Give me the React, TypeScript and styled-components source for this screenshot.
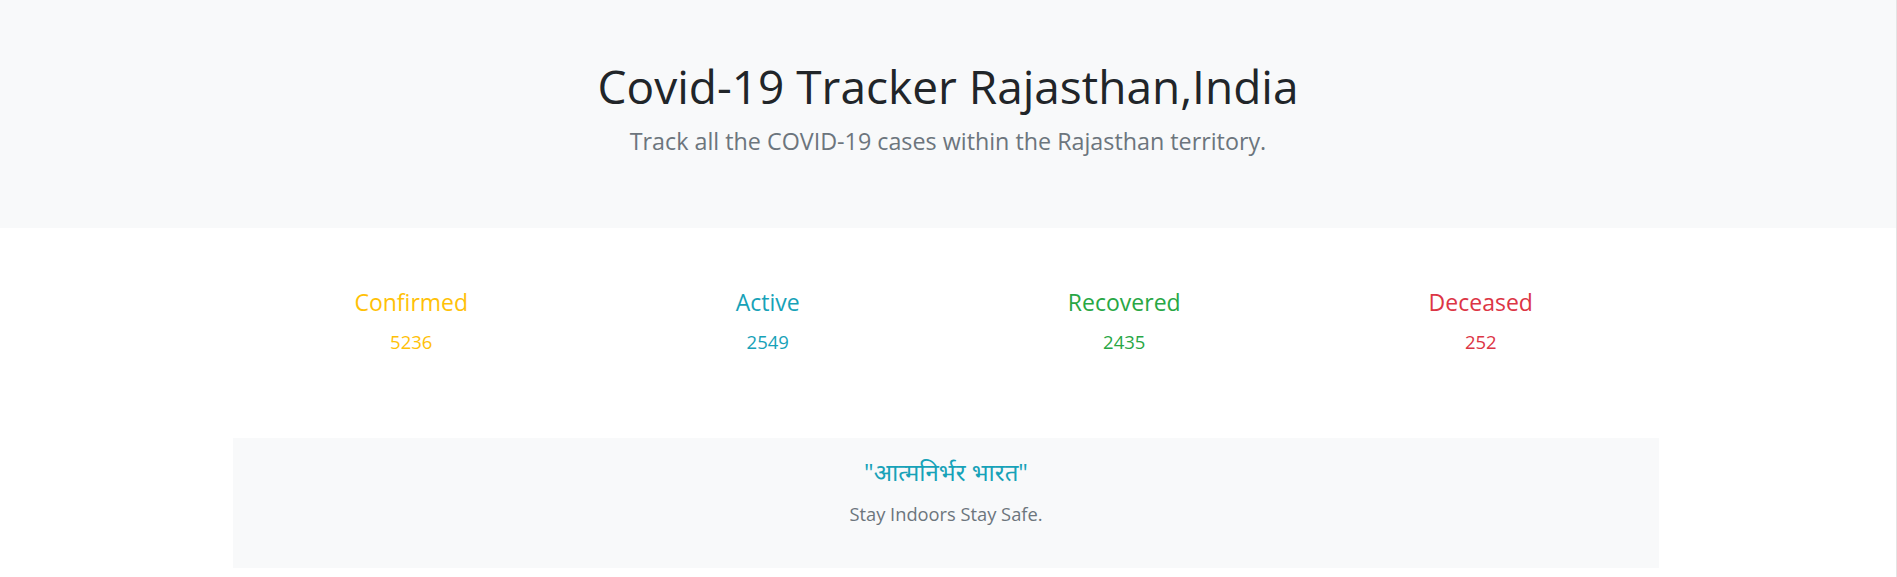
import React from "react";
import styled, { createGlobalStyle } from "styled-components";

const GlobalStyle = createGlobalStyle`
  html, body {
    margin: 0;
    padding: 0;
    background: #ffffff;
  }
  body {
    font-family: "Open Sans", "Noto Sans", sans-serif;
  }
  * { box-sizing: border-box; }
`;

const Page = styled.div`
  width: 100%;
  min-height: 577px;
  border-right: 1px solid #e4e4e4;
  background: #ffffff;
`;

const Hero = styled.header`
  background: #f8f9fa;
  height: 228px;
  padding-top: 60px;
  text-align: center;
`;

const Title = styled.h1`
  margin: 0;
  font-family: "Open Sans", "Noto Sans", sans-serif;
  font-weight: 400;
  font-size: 46px;
  line-height: 52px;
  color: #212529;
`;

const Lead = styled.p`
  margin: 14px 0 0;
  font-family: "Open Sans", "Noto Sans", sans-serif;
  font-weight: 400;
  font-size: 23.3px;
  line-height: 31.5px;
  color: #6c757d;
`;

const Container = styled.div`
  width: 1426px;
  margin-left: 233px;
`;

const StatsRow = styled.section`
  display: grid;
  grid-template-columns: repeat(4, 1fr);
  margin-top: 59.5px;
`;

const Stat = styled.div`
  display: flex;
  flex-direction: column;
  align-items: center;
  gap: 12.6px;
`;

const StatLabel = styled.h4<{ $color: string }>`
  margin: 0;
  font-family: "Open Sans", "Noto Sans", sans-serif;
  font-weight: 500;
  font-size: 23px;
  line-height: 28px;
  color: ${(p) => p.$color};
`;

const StatValue = styled.span<{ $color: string }>`
  font-family: "Open Sans", "Noto Sans", sans-serif;
  font-size: 18.5px;
  line-height: 28px;
  color: ${(p) => p.$color};
`;

const MottoBox = styled.section`
  height: 130px;
  margin-top: 82px;
  background: #f8f9fa;
  padding-top: 16px;
  text-align: center;
`;

const Motto = styled.h3`
  margin: 0;
  font-family: "Open Sans", "Noto Sans Devanagari", "Noto Sans", sans-serif;
  font-weight: 400;
  font-size: 24px;
  line-height: 36px;
  color: #17a2b8;
`;

const Tagline = styled.p`
  margin: 9.5px 0 0;
  font-family: "Open Sans", "Noto Sans", sans-serif;
  font-size: 18.3px;
  line-height: 27px;
  color: #6c757d;
`;

const stats = [
  { label: "Confirmed", value: 5236, color: "#ffc107" },
  { label: "Active", value: 2549, color: "#17a2b8" },
  { label: "Recovered", value: 2435, color: "#28a745" },
  { label: "Deceased", value: 252, color: "#dc3545" },
];

export default function App() {
  return (
    <Page>
      <GlobalStyle />
      <Hero>
        <Title>Covid-19 Tracker Rajasthan,India</Title>
        <Lead>Track all the COVID-19 cases within the Rajasthan territory.</Lead>
      </Hero>
      <Container>
        <StatsRow>
          {stats.map((s) => (
            <Stat key={s.label}>
              <StatLabel $color={s.color}>{s.label}</StatLabel>
              <StatValue $color={s.color}>{s.value}</StatValue>
            </Stat>
          ))}
        </StatsRow>
        <MottoBox>
          <Motto>"आत्मनिर्भर भारत"</Motto>
          <Tagline>Stay Indoors Stay Safe.</Tagline>
        </MottoBox>
      </Container>
    </Page>
  );
}
